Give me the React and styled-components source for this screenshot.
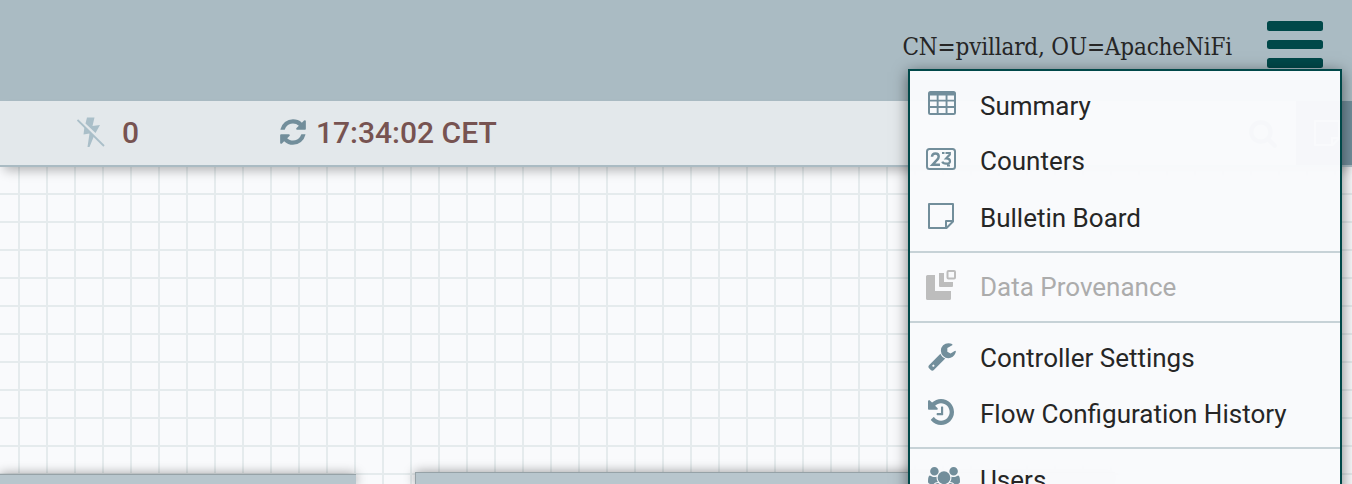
import React from 'react';
import styled, { createGlobalStyle } from 'styled-components';

const Global = createGlobalStyle`
  *, *::before, *::after { box-sizing: border-box; }
  html, body { margin: 0; height: 100%; overflow: hidden; }
  body { font-family: Roboto, "Liberation Sans", sans-serif; color: #262626; }
`;

const Page = styled.div`
  position: relative;
  display: flex;
  flex-direction: column;
  height: 484px;
  overflow: hidden;
`;

const Header = styled.header`
  display: flex;
  justify-content: flex-end;
  align-items: flex-start;
  flex: none;
  height: 101px;
  padding: 0 24px 0 0;
  background: #aabbc3;
`;

const UserName = styled.span`
  font-family: "Roboto Slab", "DejaVu Serif Condensed", "DejaVu Serif", serif;
  font-size: 24px;
  line-height: 32px;
  letter-spacing: -0.16px;
  white-space: nowrap;
  margin-top: 31px;
`;

const MenuButton = styled.button`
  display: flex;
  flex-direction: column;
  gap: 9px;
  margin: 21px 5px 0 35px;
  padding: 0;
  border: 0;
  background: none;
`;

const Bar = styled.span`
  width: 56px;
  height: 9.5px;
  border-radius: 2.5px;
  background: #004849;
`;

const StatusBar = styled.div`
  position: relative;
  display: flex;
  align-items: center;
  flex: none;
  height: 66px;
  padding-left: 77px;
  background: #e3e8eb;
  border-bottom: 2px solid #aabbc3;
  box-shadow: 0 7px 11px -4px rgba(0, 0, 0, 0.3);
`;

const Status = styled.div`
  display: flex;
  align-items: center;
  gap: ${(p) => p.$gap}px;
  width: ${(p) => p.$width}px;
  flex: none;
  font-size: 30px;
  font-weight: 500;
  line-height: 64px;
  color: #775351;
  white-space: nowrap;
  svg { color: #728e9b; margin-bottom: 2px; }
`;

const Tools = styled.div`
  display: flex;
  margin-left: auto;
  height: 64px;
`;

const Tool = styled.div`
  display: flex;
  align-items: center;
  width: ${(p) => p.$width}px;
  padding-left: ${(p) => p.$inset}px;
  background: ${(p) => (p.$active ? '#728e9b' : 'transparent')};
  color: ${(p) => (p.$active ? '#ffffff' : '#728e9b')};
`;

const Canvas = styled.main`
  display: flex;
  align-items: flex-end;
  gap: 59px;
  flex: 1;
  background-color: #f9fafc;
  background-image:
    linear-gradient(90deg, #e5ebed 2px, transparent 2px),
    linear-gradient(#e5ebed 2px, transparent 2px);
  background-size: 28px 28px;
  background-position: 18px 26px;
`;

const Processor = styled.section`
  width: ${(p) => p.$width}px;
  height: ${(p) => p.$height}px;
  flex: none;
  background: #b8c6cd;
  border: 0 solid #96a2a7;
  border-top-width: 1px;
  border-left-width: ${(p) => (p.$clipped ? 0 : 1)}px;
  box-shadow: 0 0 12px rgba(0, 0, 0, 0.4);
`;

const Menu = styled.nav`
  position: absolute;
  top: 69px;
  right: 10px;
  width: 434px;
  height: 500px;
  padding-top: 7px;
  border: 2px solid #004849;
  background: rgba(249, 250, 252, 0.977);
  box-shadow: 0 3px 14px rgba(0, 0, 0, 0.5);
`;

const Group = styled.div`
  padding: ${(p) => p.$pad || '7px 0'};
  & + & { border-top: 2px solid #c7d2d7; }
`;

const Item = styled.div`
  display: flex;
  align-items: center;
  height: ${(p) => p.$height || 56}px;
  font-size: 26px;
  color: ${(p) => (p.$disabled ? '#acacac' : '#262626')};
  white-space: nowrap;
`;

const IconSlot = styled.span`
  display: flex;
  width: 70px;
  flex: none;
  padding-left: ${(p) => p.$inset || 18}px;
  margin-bottom: ${(p) => p.$lift ?? 4}px;
  color: ${(p) => (p.$disabled ? '#bdbdbd' : '#728e9b')};
`;

const Icon = styled.svg`
  display: block;
  flex: none;
`;

const Glyph = ({ box = '0 0 1792 1792', width = 32, height = 32, d }) => (
  <Icon width={width} height={height} viewBox={box} fill="currentColor">
    <path d={d} />
  </Icon>
);

const REFRESH = 'M1639 1056q0 5-1 7-64 268-268 434.5t-478 166.5q-146 0-282.5-55t-243.5-157l-129 129q-19 19-45 19t-45-19-19-45v-448q0-26 19-45t45-19h448q26 0 45 19t19 45-19 45l-137 137q71 66 161 102t187 36q134 0 250-65t186-179q11-17 53-117 8-23 30-23h192q13 0 22.5 9.5t9.5 22.5zm25-800v448q0 26-19 45t-45 19h-448q-26 0-45-19t-19-45 19-45l138-138q-148-137-349-137-134 0-250 65t-186 179q-11 17-53 117-8 23-30 23h-199q-13 0-22.5-9.5t-9.5-22.5v-7q65-268 270-434.5t480-166.5q146 0 284 55.5t245 156.5l130-129q19-19 45-19t45 19 19 45z';
const HISTORY = 'M1664 896q0 156-61 298t-164 245-245 164-298 61q-172 0-327-72.5t-264-204.5q-7-10-6.5-22.5t8.5-20.5l137-138q10-9 25-9 16 2 23 12 73 95 179 147t225 52q104 0 198.5-40.5t163.5-109.5 109.5-163.5 40.5-198.5-40.5-198.5-109.5-163.5-163.5-109.5-198.5-40.5q-98 0-188 35.5t-160 101.5l137 138q31 30 14 69-17 40-59 40h-448q-26 0-45-19t-19-45v-448q0-42 40-59 39-17 69 14l130 129q107-101 244.5-156.5t284.5-55.5q156 0 298 61t245 164 164 245 61 298zm-640-288v448q0 14-9 23t-23 9h-320q-14 0-23-9t-9-23v-64q0-14 9-23t23-9h224v-352q0-14 9-23t23-9h64q14 0 23 9t9 23z';
const WRENCH = 'M448 1472q0-26-19-45t-45-19-45 19-19 45 19 45 45 19 45-19 19-45zm644-420l-682 682q-37 37-90 37-52 0-91-37l-106-108q-38-36-38-90 0-53 38-91l681-681q39 98 114.5 173.5t173.5 114.5zm634-435q0 39-23 106-47 134-164.5 217.5t-258.5 83.5q-185 0-316.5-131.5t-131.5-316.5 131.5-316.5 316.5-131.5q58 0 121.5 16.5t107.5 46.5q16 11 16 28t-16 28l-293 169v224l193 107q5-3 79-48.5t135.5-81 70.5-35.5q15 0 23.5 10t8.5 25z';
const USERS = 'M593 896q-162 5-265 128h-134q-82 0-138-40.5t-56-118.5q0-353 124-353 6 0 43.5 21t97.5 42.5 119 21.5q67 0 133-23-5 37-5 66 0 139 81 256zm1071 637q0 120-73 189.5t-194 69.5h-874q-121 0-194-69.5t-73-189.5q0-53 3.5-103.5t14-109 26.5-108.5 43-97.5 62-81 85.5-53.5 111.5-20q10 0 43 21.5t73 48 107 48 135 21.5 135-21.5 107-48 73-48 43-21.5q61 0 111.5 20t85.5 53.5 62 81 43 97.5 26.5 108.5 14 109 3.5 103.5zm-1024-1277q0 106-75 181t-181 75-181-75-75-181 75-181 181-75 181 75 75 181zm704 384q0 159-112.5 271.5t-271.5 112.5-271.5-112.5-112.5-271.5 112.5-271.5 271.5-112.5 271.5 112.5 112.5 271.5zm576 225q0 78-56 118.5t-138 40.5h-134q-103-123-265-128 81-117 81-256 0-29-5-66 66 23 133 23 59 0 119-21.5t97.5-42.5 43.5-21q124 0 124 353zm-128-609q0 106-75 181t-181 75-181-75-75-181 75-181 181-75 181 75 75 181z';
const SEARCH = 'M1216 832q0-185-131.5-316.5t-316.5-131.5-316.5 131.5-131.5 316.5 131.5 316.5 316.5 131.5 316.5-131.5 131.5-316.5zm512 832q0 52-38 90t-90 38q-54 0-90-38l-343-342q-179 124-399 124-143 0-273.5-55.5t-225-150-150-225-55.5-273.5 55.5-273.5 150-225 225-150 273.5-55.5 273.5 55.5 225 150 150 225 55.5 273.5q0 220-124 399l343 343q37 37 37 90z';

const TableIcon = () => (
  <Icon width="28" height="24" viewBox="0 0 28 24" fill="currentColor">
    <path fillRule="evenodd" d="M2.5 0h23Q28 0 28 2.500v19Q28 24 25.500 24h-23Q0 24 0 21.500v-19Q0 0 2.500 0zM2 4.500h6.700v4.300h-6.700zM10.600 4.500h7v4.300h-7zM19.500 4.500h6.500v4.300h-6.500zM2 10.600h6.700v4.400h-6.700zM10.600 10.600h7v4.400h-7zM19.500 10.600h6.500v4.400h-6.500zM2 17h6.700v5h-6.700zM10.600 17h7v5h-7zM19.500 17h6.500v5h-6.500z" />
  </Icon>
);

const CounterIcon = () => (
  <Icon width="30" height="22" viewBox="0 0 30 22" fill="none" stroke="currentColor">
    <rect x="1" y="1" width="28" height="20" rx="2.500" strokeWidth="2" />
    <path strokeWidth="2.500" d="M6 8.800Q6 5.600 9.400 5.600Q12.700 5.600 12.700 8.600Q12.700 10.400 11 12L6.600 16.700H14" />
    <path strokeWidth="2.200" d="M16 5H18.500M19.500 5H23.800V6.500L20.200 10.400Q24 10.400 24 13.200Q24 15.800 20 15.600Q17 15.600 16.300 13.600M21 17.500H24" />
  </Icon>
);

const NoteIcon = () => (
  <Icon width="26" height="26" viewBox="0 0 26 26" fill="none" stroke="currentColor" strokeWidth="2">
    <path strokeLinejoin="round" d="M1 1H25V18.500L18.500 25H1zM25 18H18V25" />
  </Icon>
);

const ProvenanceIcon = () => (
  <Icon width="30" height="30" viewBox="0 0 30 30" fill="currentColor">
    <path d="M1.500 5H9V21H25V28.500Q25 30 23.500 30H1.500Q0 30 0 28.500V6.500Q0 5 1.500 5z" />
    <path d="M13 3H18V12H27V16Q27 17 26 17H14Q13 17 13 16z" />
    <rect x="21.500" y="1" width="7.500" height="7.500" rx="1" fill="none" stroke="currentColor" strokeWidth="2" />
  </Icon>
);

const BoltOffIcon = () => (
  <Icon width="28" height="32" viewBox="0 0 28 32" fill="#aabfc9">
    <path d="M10 1.500H17.500L15.500 10L23 9L18.500 17L8.500 7.500z" />
    <path d="M7.500 10.500L17 20L12.500 31H10.500L12.500 17.500L6.500 18.500z" />
    <path d="M0.500 4L27 30" stroke="#aabfc9" strokeWidth="1.800" />
  </Icon>
);

const MenuItem = ({ icon, label, disabled, inset, lift, height }) => (
  <Item $disabled={disabled} $height={height}>
    <IconSlot $disabled={disabled} $inset={inset} $lift={lift}>{icon}</IconSlot>
    {label}
  </Item>
);

export default function App() {
  return (
    <Page>
      <Global />
      <Header>
        <UserName>CN=pvillard, OU=ApacheNiFi</UserName>
        <MenuButton aria-label="Menu"><Bar /><Bar /><Bar /></MenuButton>
      </Header>
      <StatusBar>
        <Status $gap={17} $width={201}><BoltOffIcon />0</Status>
        <Status $gap={8} $width={240}><Glyph d={REFRESH} width={30} height={30} />17:34:02 CET</Status>
        <Tools>
          <Tool $width={48}><Glyph d={SEARCH} width={30} height={30} /></Tool>
          <Tool $active $width={56} $inset={18}><NoteIcon /></Tool>
        </Tools>
      </StatusBar>
      <Canvas>
        <Processor $width={356} $height={10} $clipped />
        <Processor $width={700} $height={12} />
      </Canvas>
      <Menu>
        <Group $pad="0 0 3px">
          <MenuItem icon={<TableIcon />} label="Summary" lift={6} />
          <MenuItem icon={<CounterIcon />} label="Counters" inset={16} height={54} />
          <MenuItem icon={<NoteIcon />} label="Bulletin Board" height={60} />
        </Group>
        <Group $pad="6px 0">
          <MenuItem disabled icon={<ProvenanceIcon />} label="Data Provenance" inset={16} />
        </Group>
        <Group $pad="7px 0 5px">
          <MenuItem icon={<Glyph d={WRENCH} box="64 0 1728 1792" width={29} height={30} />} label="Controller Settings" />
          <MenuItem icon={<Glyph d={HISTORY} box="128 128 1536 1536" width={26} height={26} />} label="Flow Configuration History" />
        </Group>
        <Group $pad="3px 0">
          <MenuItem icon={<Glyph d={USERS} box="0 0 1920 1792" width={32} height={30} />} label="Users" lift={-3} />
        </Group>
      </Menu>
    </Page>
  );
}
